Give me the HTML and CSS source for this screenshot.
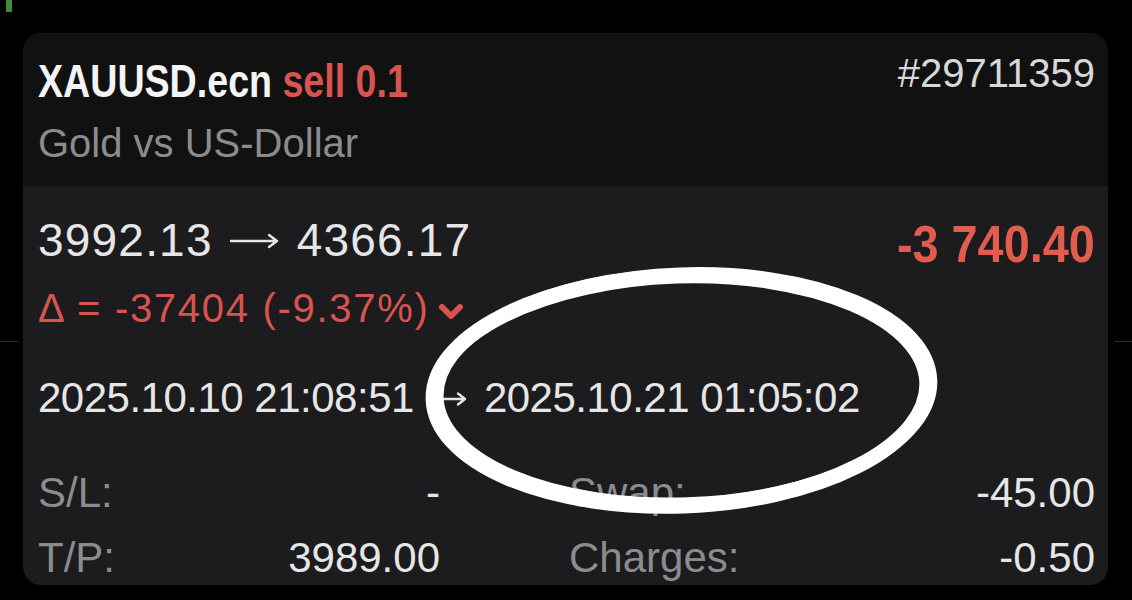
FILE: index.html
```html
<!DOCTYPE html>
<html lang="en">
<head>
  <meta charset="UTF-8">
  <title>Position</title>
  <link rel="stylesheet" href="styles.css">
</head>
<body>
  <div class="edge-mark"></div>
  <div class="side-line side-line--left"></div>
  <div class="side-line side-line--right"></div>
  <div class="card">
    <div class="card__head">
      <div class="card__row">
        <div class="title"><span class="title__inner">XAUUSD.ecn <span class="title__side">sell 0.1</span></span></div>
        <div class="ticket">#29711359</div>
      </div>
      <div class="subtitle">Gold vs US-Dollar</div>
    </div>
    <div class="card__body">
      <div class="card__row">
        <div>
          <div class="prices">
            <span>3992.13</span>
            <svg class="prices__arrow" viewBox="0 0 52 20" width="52" height="20">
              <path d="M2 10 H48 M40 4 L48 10 L40 16" fill="none" stroke="#e6e6e6" stroke-width="2.4" stroke-linecap="round" stroke-linejoin="round"/>
            </svg>
            <span>4366.17</span>
          </div>
          <div class="delta">Δ = -37404 (-9.37%)
            <svg class="delta__chevron" viewBox="0 0 28 20" width="28" height="20">
              <path d="M5 6 L14 15 L23 6" fill="none" stroke="#d9534c" stroke-width="6" stroke-linecap="round" stroke-linejoin="round"/>
            </svg>
          </div>
        </div>
        <div class="profit"><span class="profit__inner">-3 740.40</span></div>
      </div>
      <div class="dates">
        <span>2025.10.10 21:08:51</span>
        <svg class="dates__arrow" viewBox="0 0 38 20" width="38" height="20">
          <path d="M2 10 H35 M28 4.5 L35 10 L28 15.5" fill="none" stroke="#e6e6e6" stroke-width="2.4" stroke-linecap="round" stroke-linejoin="round"/>
        </svg>
        <span>2025.10.21 01:05:02</span>
      </div>
      <div class="details">
        <div class="details__cell"><span class="label">S/L:</span><span>-</span></div>
        <div class="details__cell"><span class="label">Swap:</span><span>-45.00</span></div>
        <div class="details__cell"><span class="label">T/P:</span><span>3989.00</span></div>
        <div class="details__cell"><span class="label">Charges:</span><span>-0.50</span></div>
      </div>
    </div>
  </div>
  <svg class="scribble" viewBox="0 0 1132 600" width="1132" height="600">
    <ellipse cx="680" cy="391" rx="247" ry="115" transform="rotate(-2 680 391)" fill="none" stroke="#fff" stroke-width="15"/>
    <ellipse cx="684" cy="389" rx="247" ry="115" transform="rotate(-2 680 391)" fill="none" stroke="#fff" stroke-width="13"/>
  </svg>
</body>
</html>
```

FILE: styles.css
```css
body {
  margin: 0;
  width: 1132px;
  height: 600px;
  overflow: hidden;
  background: #000;
  font-family: "Liberation Sans", Arial, sans-serif;
  color: #e4e4e4;
  position: relative;
}

.edge-mark {
  position: absolute;
  left: 6px;
  top: 0;
  width: 6px;
  height: 12px;
  background: #3f8a3c;
}

.side-line {
  position: absolute;
  top: 341px;
  height: 1px;
  width: 18px;
  background: #2a2a2a;
}

.side-line--left {
  left: 0;
}

.side-line--right {
  right: 0;
}

.card {
  margin: 33px 0 0 23px;
  width: 1085px;
  border-radius: 18px;
  overflow: hidden;
  background: #1c1c1e;
}

.card__head {
  background: #111112;
  padding: 20px 13px 19px 15px;
}

.card__row {
  display: flex;
  justify-content: space-between;
  align-items: flex-start;
}

.title {
  font-weight: bold;
  font-size: 47px;
  line-height: 56px;
  color: #f4f4f4;
  white-space: nowrap;
}

.title__inner {
  display: inline-block;
  transform: scaleX(0.8);
  transform-origin: left center;
}

.title__side {
  color: #d9544f;
}

.ticket {
  font-size: 40px;
  line-height: 40px;
  color: #d8d8d8;
}

.subtitle {
  margin-top: 10px;
  font-size: 40px;
  line-height: 48px;
  color: #8c8c8e;
}

.card__body {
  padding: 29px 13px 2px 15px;
}

.prices {
  display: flex;
  align-items: center;
  gap: 16px;
  font-size: 46px;
  line-height: 50px;
  letter-spacing: 1.2px;
  color: #e6e6e6;
}

.prices__arrow {
  margin-top: 2px;
}

.delta {
  margin-top: 19px;
  font-size: 40px;
  line-height: 48px;
  letter-spacing: 1.7px;
  color: #d9544f;
  display: flex;
  align-items: center;
  gap: 8px;
}

.delta__chevron {
  margin-top: 6px;
}

.profit {
  margin-top: 4px;
  font-weight: bold;
  font-size: 52px;
  line-height: 50px;
  color: #e35d4e;
  white-space: nowrap;
}

.profit__inner {
  display: inline-block;
  transform: scaleX(0.9);
  transform-origin: right center;
}

.dates {
  margin-top: 41px;
  display: flex;
  align-items: center;
  gap: 16px;
  font-size: 42px;
  line-height: 50px;
  letter-spacing: -0.5px;
  color: #e6e6e6;
}

.dates__arrow {
  margin-top: 2px;
}

.details {
  margin-top: 45px;
  display: grid;
  grid-template-columns: 402px 1fr;
  column-gap: 129px;
  row-gap: 15px;
  font-size: 42px;
  line-height: 50px;
  color: #e6e6e6;
}

.details__cell {
  display: flex;
  justify-content: space-between;
}

.label {
  color: #8c8c8e;
}

.scribble {
  position: absolute;
  left: 0;
  top: 0;
}
```
